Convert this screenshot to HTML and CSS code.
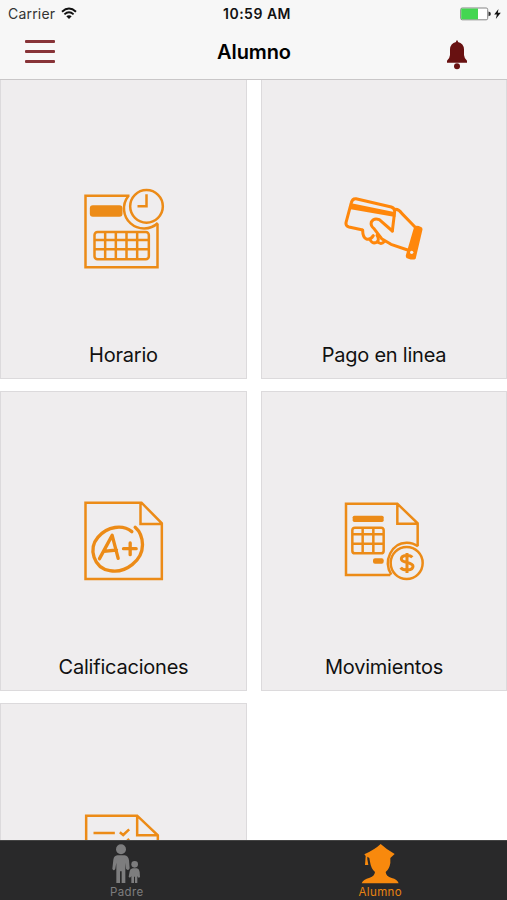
FILE: index.html
```html
<!DOCTYPE html>
<html lang="es">
<head>
<meta charset="utf-8">
<title>Alumno</title>
<link rel="stylesheet" href="styles.css">
</head>
<body>
<div class="app">
  <header class="header">
    <div class="status">
      <div class="carrier"><span>Carrier</span>
        <svg width="16" height="13" viewBox="0 0 16 13"><g fill="none" stroke="#111" stroke-width="1.9"><path d="M1 4.7Q8-1.7 15 4.7"/><path d="M3.4 7.4Q8 3.2 12.6 7.4"/></g><path fill="#111" d="M5.3 9.3Q8 7 10.7 9.3L8 12z"/></svg>
      </div>
      <div class="time">10:59 AM</div>
      <div class="battery">
        <svg width="42" height="14" viewBox="0 0 42 14"><rect x=".7" y="1" width="27" height="11.8" rx="1.5" fill="#fff" stroke="#858585"/><path fill="#43d651" d="M1.2 1.5H18v10.8H1.2z"/><path fill="#333" d="M28.5 4.5q2.4.5 2.4 2.4t-2.4 2.4z"/><path fill="#111" d="M38.5 2L34.2 7.6h2.7L35.8 12l5-6.2h-3z"/></svg>
      </div>
    </div>
    <div class="nav">
      <div class="menu"><i></i><i></i><i></i></div>
      <h1>Alumno</h1>
      <svg class="bell" width="22" height="30" viewBox="0 0 66 90"><path fill="#681111" d="M30 6q0-5 3-5t3 5q17 4 18 22v17q1 11 9 17v6H3v-6q8-6 9-17V28Q13 10 30 6z"/><circle cx="33" cy="79" r="9" fill="#681111"/></svg>
    </div>
  </header>
  <main class="grid">
    <section class="card">
      <svg class="icon" viewBox="-3.5 0 330 300"><g class="line"><path d="M178 47H46v215h216V131"/><path d="M174 49A60 60 0 0 0 263 129"/><circle cx="229" cy="79" r="49"/><path d="M229 43v36h-27"/><rect x="73" y="156" width="163" height="82" rx="9"/><path d="M105 156v82M137 156v82M169 156v82M201 156v82M73 180h163M73 208h163"/></g><rect class="fill" x="59" y="76" width="98" height="34" rx="9"/></svg>
      <h2>Horario</h2>
    </section>
    <section class="card">
      <svg class="icon bright" viewBox="-3 0 330 300"><g class="line hand"><path d="M95 149L57 141Q46 138 48 128L64 68Q67 55 78 56L184 81Q195 85 194 95L187 153"/><path d="M197 88Q207 88 216 101L258 144"/><path d="M187 153L148 119Q131 113 124 126Q121 137 132 146L155 176L183 193L233 210"/><path d="M98 150Q98 172 109 177Q121 181 130 167M119 177Q126 193 139 187Q150 181 141 166M143 184Q152 197 164 184"/></g><path class="fill" d="M64 70L196 97V111L62 88zM253 139Q261 134 273 141Q279 143 277 151L257 236Q250 241 235 236Q225 235 228 224z"/><circle cx="245" cy="217" r="5" fill="#efedee"/></svg>
      <h2>Pago en linea</h2>
    </section>
    <section class="card">
      <svg class="icon" viewBox="-3.5 6 330 300"><g class="line"><path d="M46 38H214L275 100V267H46zM211 38V102H275"/></g><g class="line pen"><path d="M185 125C158 103 112 108 83 142C54 176 70 234 119 242C167 251 217 211 217 164Q216 130 195 112"/><path d="M88 206L126 136L144 205M101 184L139 180M160 176H198M180 159V194"/></g></svg>
      <h2>Calificaciones</h2>
    </section>
    <section class="card">
      <svg class="icon" viewBox="-3 6 330 300"><g class="line"><path d="M181 255H48V41H202L263 100V169M202 41V101H263"/><path d="M184 254C158 214 185 157 231 158Q249 158 264 169"/><circle cx="230" cy="219" r="48"/><rect x="67" y="113" width="94" height="77" rx="8"/><path d="M98 113v77M130 113v77M67 133h94M67 161h94"/><path class="dollar" d="M247 202C240 194 214 194 214 207C214 220 249 215 249 229C249 243 219 243 212 233M231 189V249"/></g><rect class="fill" x="68" y="77" width="93" height="19" rx="5"/><rect class="fill" x="129" y="205" width="32" height="16" rx="6"/></svg>
      <h2>Movimientos</h2>
    </section>
    <section class="card">
      <svg class="icon" viewBox="-3.5 12 330 300"><g class="line"><path d="M48 270V47H201L263 106V270M201 47V106H263"/><path d="M70 99H134M149 97L159 105L177 88M149 126L159 134L177 117"/></g></svg>
    </section>
  </main>
  <footer class="tabs">
    <div class="tab"><svg viewBox="0 0 90 120"><circle cx="27" cy="16" r="15"/><path d="M16 34H38Q49 35 51 49L53 73Q49 83 42 74L40 56V117H29V82H24V117H13V56L10 74Q5 83 1 74L4 47Q6 35 16 34z"/><circle cx="68" cy="61" r="10"/><path d="M62 73H75Q82 75 83 84L84 99Q79 104 76 96V117H69V98H66V117H58V96Q54 104 50 98L53 82Q54 74 62 73z"/></svg><span>Padre</span></div>
    <div class="tab active"><svg viewBox="0 0 120 120"><path d="M62 0Q78 15 104 30L91 42V57Q88 76 77 84Q78 97 95 102Q112 106 116 118H5Q9 106 29 101Q44 96 45 84Q33 74 30 53L28 42L22 38V46L25 63H15L17 36L13 31Q44 17 62 0z"/></svg><span>Alumno</span></div>
  </footer>
</div>
</body>
</html>
```
FILE: styles.css
```css
* { box-sizing: border-box; }
body { margin: 0; background: #fff; color: #111; font-family: Inter, "Liberation Sans", sans-serif; }
svg { display: block; }
.app { height: 900px; display: flex; flex-direction: column; overflow: hidden; }
.header { height: 79px; flex: none; background: #f7f7f7; box-shadow: 0 1px 0 #c9c7c8; z-index: 1; }
.status { height: 27px; padding: 0 5px 0 8px; display: grid; grid-template-columns: 1fr auto 1fr; align-items: center; font-size: 14px; }
.carrier { display: flex; gap: 6px; align-items: center; letter-spacing: .2px; color: #333; }
.time { font-weight: 600; font-size: 14px; letter-spacing: .5px; margin-left: 4px; }
.battery { justify-self: end; }
.nav { height: 52px; padding: 0 39px 0 25px; display: grid; grid-template-columns: 1fr auto 1fr; align-items: center; }
.menu { display: grid; gap: 7px; width: 30px; margin-top: -4px; }
.menu i { height: 3px; background: #873337; border-radius: 1px; }
h1 { margin: -2px 0 0 15px; font-size: 20px; font-weight: 600; letter-spacing: -.1px; color: #000; }
.bell { justify-self: end; margin-top: 3px; }
.grid { flex: 1; min-height: 0; overflow: hidden; display: grid; grid-template-columns: 247px 246px; grid-auto-rows: 300px; gap: 12px 14px; }
.card { background: #efedee; border: 1px solid #dcdadc; padding-top: 100px; display: flex; flex-direction: column; align-items: center; }
.icon { width: 110px; height: 100px; flex: none; }
.line { fill: none; stroke: #ec8b17; stroke-width: 7.5; }
.fill { fill: #ec8b17; }
.bright .line { stroke: #ff870b; stroke-width: 9; stroke-linejoin: round; stroke-linecap: round; }
.bright .fill { fill: #ff870b; }
.pen { stroke-width: 10; stroke-linecap: round; stroke-linejoin: round; }
.dollar { stroke-width: 9; }
h2 { margin: 62px 0 0; font-size: 20px; line-height: 26px; font-weight: 400; letter-spacing: -.22px; color: #111; }
.tabs { height: 60px; flex: none; background: #29292a; display: grid; grid-template-columns: 1fr 1fr; border-top: 1px solid #444; color: #7d7d7e; }
.tab { display: flex; flex-direction: column; align-items: center; padding-top: 3px; font-size: 11.5px; line-height: 14px; letter-spacing: .4px; }
.tab svg { height: 40px; width: 40px; fill: currentColor; }
.tab span { margin-top: 1px; }
.active { color: #e98410; }
.active svg { fill: #f8890d; }
```
